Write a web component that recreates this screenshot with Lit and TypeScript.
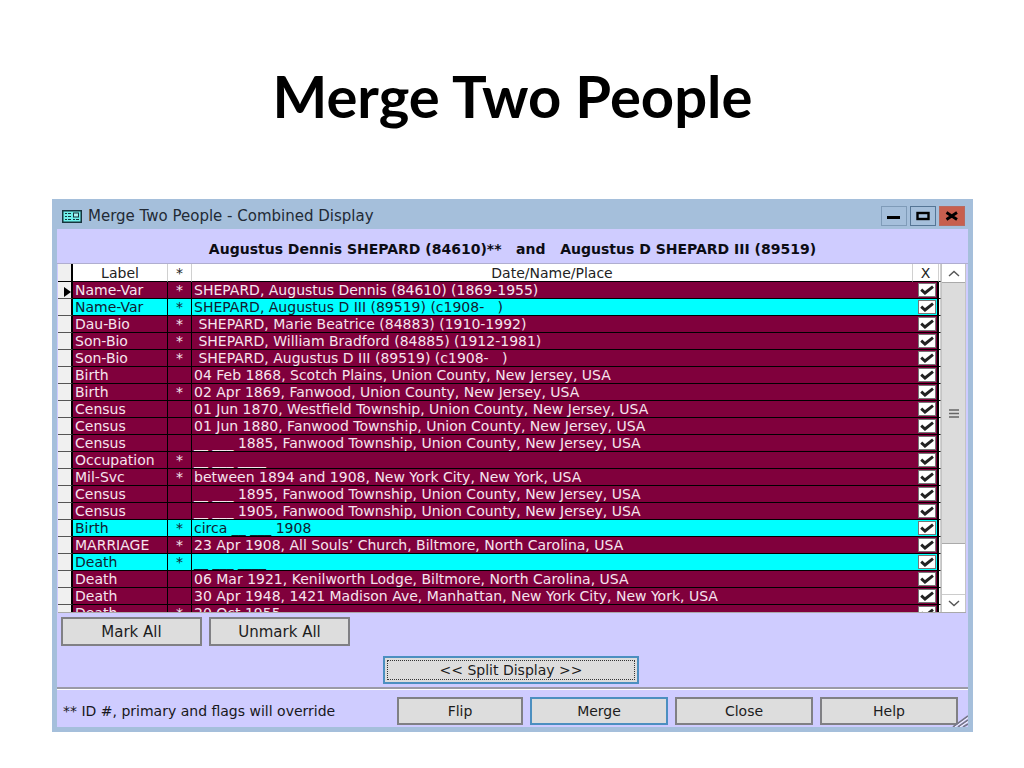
import { LitElement, html, css } from "lit";
import { customElement, property } from "lit/decorators.js";

interface Entry {
  label: string;
  star?: boolean;
  text: string;
  second?: boolean;
}

const entries: Entry[] = [
  { label: "Name-Var", star: true, text: "SHEPARD, Augustus Dennis (84610) (1869-1955)" },
  { label: "Name-Var", star: true, text: "SHEPARD, Augustus D III (89519) (c1908-   )", second: true },
  { label: "Dau-Bio", star: true, text: " SHEPARD, Marie Beatrice (84883) (1910-1992)" },
  { label: "Son-Bio", star: true, text: " SHEPARD, William Bradford (84885) (1912-1981)" },
  { label: "Son-Bio", star: true, text: " SHEPARD, Augustus D III (89519) (c1908-   )" },
  { label: "Birth", text: "04 Feb 1868, Scotch Plains, Union County, New Jersey, USA" },
  { label: "Birth", star: true, text: "02 Apr 1869, Fanwood, Union County, New Jersey, USA" },
  { label: "Census", text: "01 Jun 1870, Westfield Township, Union County, New Jersey, USA" },
  { label: "Census", text: "01 Jun 1880, Fanwood Township, Union County, New Jersey, USA" },
  { label: "Census", text: "__ ___ 1885, Fanwood Township, Union County, New Jersey, USA" },
  { label: "Occupation", star: true, text: "__ ___ ____" },
  { label: "Mil-Svc", star: true, text: "between 1894 and 1908, New York City, New York, USA" },
  { label: "Census", text: "__ ___ 1895, Fanwood Township, Union County, New Jersey, USA" },
  { label: "Census", text: "__ ___ 1905, Fanwood Township, Union County, New Jersey, USA" },
  { label: "Birth", star: true, text: "circa __ ___ 1908", second: true },
  { label: "MARRIAGE", star: true, text: "23 Apr 1908, All Souls’ Church, Biltmore, North Carolina, USA" },
  { label: "Death", star: true, text: "__ ___ ____", second: true },
  { label: "Death", text: "06 Mar 1921, Kenilworth Lodge, Biltmore, North Carolina, USA" },
  { label: "Death", text: "30 Apr 1948, 1421 Madison Ave, Manhattan, New York City, New York, USA" },
  { label: "Death", star: true, text: "20 Oct 1955" },
];

@customElement("event-grid")
class EventGrid extends LitElement {
  @property({ attribute: false }) entries: Entry[] = [];

  static styles = css`
    :host {
      display: flex;
      height: 348px;
      overflow: hidden;
      background: #fff;
      margin: 0 2px 0 1px;
      border-bottom: 1px solid #a9a9a9;
    }
    .view {
      flex: 1;
      min-width: 0;
      overflow: hidden;
    }
    table {
      width: 100%;
      table-layout: fixed;
      border-collapse: separate;
      border-spacing: 0;
      font-size: 13px;
      line-height: 16px;
    }
    th,
    td {
      box-sizing: border-box;
      padding: 0;
      height: 17px;
      border-bottom: 1px solid #000;
      overflow: hidden;
      white-space: nowrap;
    }
    th {
      height: 18px;
      font-weight: normal;
      background: #fff;
      color: #222;
      text-align: center;
      border-right: 1px solid #d0d0d0;
    }
    th.selector {
      background: #f0f0f0;
    }
    .selector {
      width: 15px;
      border-right: 2px solid #000;
    }
    .label {
      width: 95px;
    }
    .star {
      width: 24px;
    }
    .mark {
      width: 26px;
    }
    .edge {
      width: 2px;
    }
    td {
      background: #80003c;
      color: #f6e4ee;
      border-right: 1px solid #000;
      padding-left: 2px;
    }
    td.selector {
      background: #f0f0f0;
      padding: 0;
      color: #000;
      border-bottom-color: #555;
    }
    td.edge {
      background: #fff;
      padding: 0;
      border-right-color: #d0d0d0;
    }
    td.star {
      padding: 0;
      text-align: center;
    }
    td.text {
      border-right: 0;
      white-space: pre;
    }
    td.label,
    td.star,
    td.text,
    th {
      font-size: 14px;
    }
    td.mark {
      padding: 0 0 0 5px;
      border-right: 2px solid #000;
    }
    .second td.label,
    .second td.star,
    .second td.text,
    .second td.mark {
      background: #00ffff;
      color: #102030;
    }
    .selector svg {
      display: block;
      margin: 3px 0 0 6px;
    }
    .tick {
      display: grid;
      width: 18px;
      height: 16px;
      place-items: center;
    }
    .tick input,
    .tick svg {
      grid-area: 1 / 1;
      margin: 0;
    }
    .tick input {
      appearance: none;
      box-sizing: border-box;
      width: 18px;
      height: 14px;
      background: #fff;
      border: 1px solid #777;
    }
    .tick svg {
      pointer-events: none;
      visibility: hidden;
      z-index: 1;
    }
    .tick input:checked + svg {
      visibility: visible;
    }
    .bar {
      display: flex;
      flex-direction: column;
      width: 25px;
      box-sizing: border-box;
      border: solid #c4c4c4;
      border-width: 0 1px;
      background: #fff;
    }
    .bar button {
      display: grid;
      place-items: center;
      height: 18px;
      flex: none;
      padding: 0;
      border: 0;
      background: #fff;
    }
    .bar .up {
      height: 19px;
      border-bottom: 1px solid #aaa;
    }
    .bar .down {
      border-top: 1px solid #ccc;
    }
    .track {
      flex: 1;
    }
    .thumb {
      height: 84%;
      box-sizing: border-box;
      display: grid;
      place-items: center;
      background: #dcdcdc;
      border-bottom: 1px solid #aaa;
    }
  `;

  render() {
    return html`
      <div class="view">
        <table>
          <thead>
            <tr>
              <th class="selector"></th>
              <th class="label">Label</th>
              <th class="star">*</th>
              <th class="text">Date/Name/Place</th>
              <th class="mark">X</th>
              <th class="edge"></th>
            </tr>
          </thead>
          <tbody>
            ${this.entries.map(
              (e, i) => html`<tr class=${e.second ? "second" : "first"}>
                <td class="selector">
                  ${i === 0
                    ? html`<svg width="7" height="10" viewBox="0 0 7 10"><path d="M0 0L7 5L0 10Z" /></svg>`
                    : ""}
                </td>
                <td class="label">${e.label}</td>
                <td class="star">${e.star ? "*" : ""}</td>
                <td class="text">${e.text}</td>
                <td class="mark">
                  <label class="tick">
                    <input type="checkbox" checked aria-label="Include ${e.label}" />
                    <svg width="14" height="10" viewBox="0 0 14 10">
                      <path d="M1.2 4.6L5 8L13 1.6" fill="none" stroke="#222" stroke-width="2.9" />
                    </svg>
                  </label>
                </td>
                <td class="edge"></td>
              </tr>`
            )}
          </tbody>
        </table>
      </div>
      <div class="bar">
        <button class="up" aria-label="Scroll up">
          <svg width="12" height="7" viewBox="0 0 12 7"><path d="M1 6L6 1.5L11 6" fill="none" stroke="#555" stroke-width="1.4" /></svg>
        </button>
        <div class="track">
          <div class="thumb">
            <svg width="10" height="9" viewBox="0 0 10 9"><path d="M0 1H10M0 4.5H10M0 8H10" stroke="#666" stroke-width="1.6" /></svg>
          </div>
        </div>
        <button class="down" aria-label="Scroll down">
          <svg width="12" height="7" viewBox="0 0 12 7"><path d="M1 1L6 5.5L11 1" fill="none" stroke="#555" stroke-width="1.4" /></svg>
        </button>
      </div>
    `;
  }
}

@customElement("app-root")
class AppRoot extends LitElement {
  static styles = css`
    :host {
      display: block;
      min-height: 100vh;
      box-sizing: border-box;
      padding: 60px 51px 36px 52px;
      background: #fff;
      font-family: "DejaVu Sans", sans-serif;
    }
    h1 {
      margin: 0 0 67px;
      text-align: center;
      font: 700 58px/72px Lato, sans-serif;
      color: #000;
    }
    .window {
      border: solid #a5bfdb;
      border-width: 0 5px 5px;
      background: #cfccff;
    }
    .title {
      display: flex;
      align-items: center;
      height: 30px;
      padding: 4px 4px 0 6px;
      margin: 0 -1px;
      box-sizing: border-box;
      background: #a5bfdb;
      font-size: 15px;
      line-height: 18px;
      color: #222a35;
    }
    .title .name {
      flex: 1;
      margin-left: 6px;
    }
    .controls {
      display: flex;
      gap: 3px;
    }
    .controls button {
      display: grid;
      place-items: center;
      width: 26px;
      height: 20px;
      padding: 0;
      border: 1px solid #7f9bb8;
      background: #a5bfdb;
    }
    .controls .max {
      border-color: #557595;
    }
    .controls .close {
      background: #c75f4e;
      border-color: #b86a60;
    }
    .people {
      display: flex;
      justify-content: center;
      align-items: center;
      height: 35px;
      padding-top: 5px;
      box-sizing: border-box;
      border-bottom: 1px solid #b0aed0;
      margin: 0;
      font: 700 14px/16px "DejaVu Sans", sans-serif;
      white-space: pre;
      color: #0c0c14;
    }
    .btn {
      box-sizing: border-box;
      height: 28px;
      padding: 0;
      border: 2px solid #808084;
      background: #dddddd;
      color: #1c1c1c;
      font: 14px/16px "DejaVu Sans", sans-serif;
      text-align: center;
    }
    .btn.blue {
      border-color: #4c8fc0;
    }
    .marks {
      display: flex;
      gap: 7px;
      padding: 4px;
    }
    .marks .btn {
      width: 141px;
      height: 29px;
      font-size: 15px;
    }
    .split {
      display: flex;
      justify-content: center;
      padding: 6px 3px 3px 0;
    }
    .split .btn {
      width: 256px;
      height: 28px;
      outline: 1px dotted #333;
      outline-offset: -5px;
    }
    .foot {
      display: flex;
      align-items: center;
      height: 40px;
      box-sizing: border-box;
      padding: 6px 10px 0 6px;
      border-top: 2px solid #9a9aa6;
      box-shadow: inset 0 1px #fff;
      gap: 7px;
    }
    .foot .note {
      flex: 1;
      font-size: 14px;
      color: #181820;
    }
    .foot .btn {
      width: 138px;
    }
    .foot .flip {
      width: 126px;
    }
    .bottom {
      position: relative;
    }
    .grip {
      position: absolute;
      right: 0;
      bottom: 0;
    }
  `;

  render() {
    return html`
      <h1>Merge Two People</h1>
      <section class="window">
        <header class="title">
          <svg width="20" height="13" viewBox="0 0 20 13">
            <rect x="0.75" y="0.75" width="18.5" height="11.5" fill="#6ff0ea" stroke="#16343c" stroke-width="1.5" />
            <path d="M3 3.5H5M6 3.5H9M3 6.5H5M6 6.5H9M3 9.5H5M6 9.5H9M11 9.5H13M14 9.5H17" stroke="#16343c" />
            <rect x="11.5" y="3" width="5" height="4" fill="#a8f4f0" stroke="#16343c" />
          </svg>
          <span class="name">Merge Two People - Combined Display</span>
          <div class="controls">
            <button aria-label="Minimize">
              <svg width="14" height="10" viewBox="0 0 14 10"><path d="M0 6.5H13" stroke="#000" stroke-width="3" /></svg>
            </button>
            <button class="max" aria-label="Maximize">
              <svg width="14" height="10" viewBox="0 0 14 10"><rect x="1.5" y="2" width="11" height="6" fill="none" stroke="#000" stroke-width="2.4" /></svg>
            </button>
            <button class="close" aria-label="Close window">
              <svg width="14" height="10" viewBox="0 0 14 10"><path d="M1.5 1.5L12 8.5M12 1.5L1.5 8.5" stroke="#000" stroke-width="2.8" /></svg>
            </button>
          </div>
        </header>
        <h2 class="people">Augustus Dennis SHEPARD (84610)**   and   Augustus D SHEPARD III (89519)</h2>
        <event-grid .entries=${entries}></event-grid>
        <div class="marks">
          <button class="btn">Mark All</button>
          <button class="btn">Unmark All</button>
        </div>
        <div class="split">
          <button class="btn blue">&lt;&lt; Split Display &gt;&gt;</button>
        </div>
        <div class="bottom">
          <footer class="foot">
            <span class="note">** ID #, primary and flags will override</span>
            <button class="btn flip">Flip</button>
            <button class="btn blue">Merge</button>
            <button class="btn">Close</button>
            <button class="btn">Help</button>
          </footer>
          <svg class="grip" width="16" height="12" viewBox="0 0 16 12">
            <path d="M1 12L16 1M6 12L16 5M11 12L16 9" stroke="#77778a" stroke-width="1.6" />
            <path d="M3 12L16 2.6M8 12L16 6.6" stroke="#fff" stroke-width="0.8" />
          </svg>
        </div>
      </section>
    `;
  }
}
